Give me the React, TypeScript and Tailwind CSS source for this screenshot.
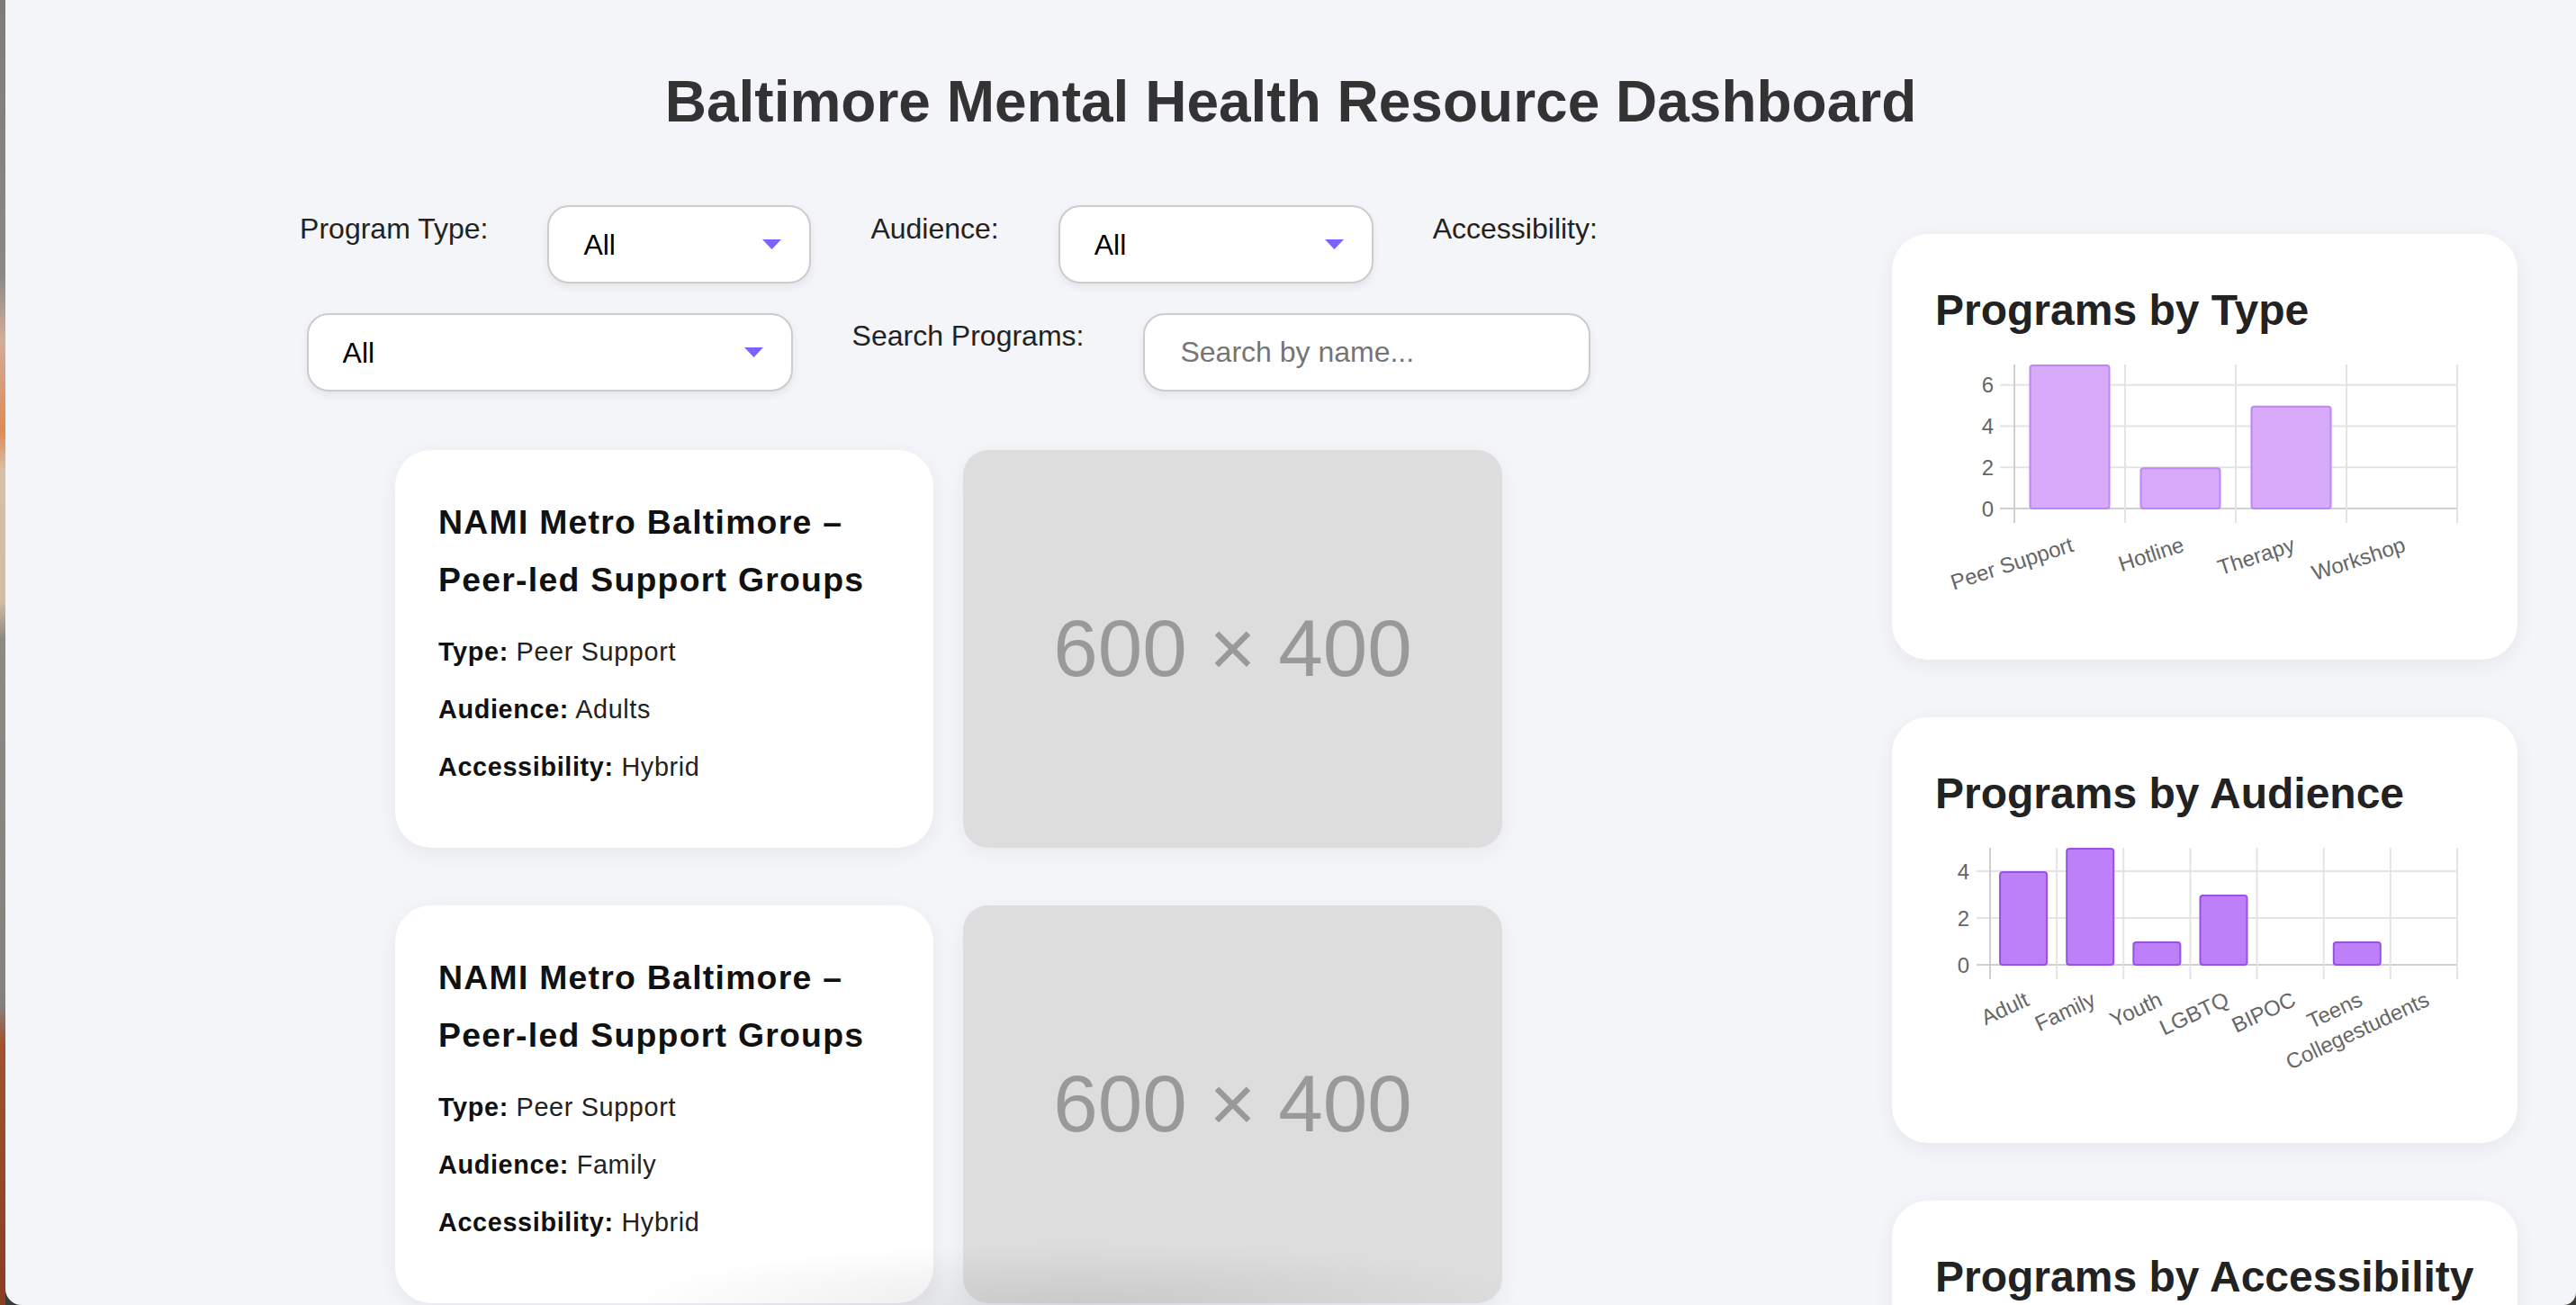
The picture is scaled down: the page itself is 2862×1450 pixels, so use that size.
import React from "react";

type Datum = { label: string; value: number };

const typeData: Datum[] = [
  { label: "Peer Support", value: 7 },
  { label: "Hotline", value: 2 },
  { label: "Therapy", value: 5 },
  { label: "Workshop", value: 0 },
];

const audienceData: Datum[] = [
  { label: "Adult", value: 4 },
  { label: "Family", value: 5 },
  { label: "Youth", value: 1 },
  { label: "LGBTQ", value: 3 },
  { label: "BIPOC", value: 0 },
  { label: "Teens", value: 1 },
  { label: "Collegestudents", value: 0 },
];

const programs = [
  { title: "NAMI Metro Baltimore – Peer-led Support Groups", type: "Peer Support", audience: "Adults", access: "Hybrid" },
  { title: "NAMI Metro Baltimore – Peer-led Support Groups", type: "Peer Support", audience: "Family", access: "Hybrid" },
];

function BarChart({
  data,
  max,
  ticks,
  x0,
  hx0,
  zero,
  tickX,
  rot,
  labelY,
  barW,
  fill,
  stroke,
}: {
  data: Datum[];
  max: number;
  ticks: number[];
  x0: number;
  hx0: number;
  zero: number;
  tickX: number;
  rot: number;
  labelY: number;
  barW: number;
  fill: string;
  stroke: string;
}) {
  const top = 32;
  const x1 = 580;
  const unit = (zero - top) / max;
  const cw = (x1 - x0) / data.length;

  return (
    <svg width="599" height="312" className="block">
      {ticks.map((t) => (
        <line
          key={"h" + t}
          x1={hx0}
          x2={x1}
          y1={zero - t * unit}
          y2={zero - t * unit}
          stroke={t === 0 ? "#cfcfcf" : "#e4e4e4"}
          strokeWidth="2"
        />
      ))}
      {Array.from({ length: data.length + 1 }, (_, i) => (
        <line
          key={"v" + i}
          x1={x0 + i * cw}
          x2={x0 + i * cw}
          y1={top}
          y2={zero + 16}
          stroke={i === 0 ? "#cfcfcf" : "#e4e4e4"}
          strokeWidth="2"
        />
      ))}
      {data.map((d, i) =>
        d.value > 0 ? (
          <rect
            key={d.label}
            x={x0 + i * cw + cw / 2 - barW / 2}
            y={zero - d.value * unit + 1}
            width={barW}
            height={d.value * unit - 1}
            rx="3"
            fill={fill}
            stroke={stroke}
            strokeWidth="2"
          />
        ) : null
      )}
      {ticks.map((t) => (
        <text
          key={"t" + t}
          x={tickX}
          y={zero - t * unit}
          textAnchor="end"
          dominantBaseline="central"
          fontSize="24"
          fill="#666"
        >
          {t}
        </text>
      ))}
      {data.map((d, i) => (
        <text
          key={"l" + d.label}
          transform={`translate(${x0 + i * cw + cw / 2} ${labelY}) rotate(${rot})`}
          y="18"
          textAnchor="end"
          fontSize="24"
          fill="#666"
        >
          {d.label}
        </text>
      ))}
    </svg>
  );
}

function FilterLabel({ children, className = "" }: { children: React.ReactNode; className?: string }) {
  return <label className={"text-[32px] leading-[37px] text-[#222] " + className}>{children}</label>;
}

function SelectBox({ className }: { className: string }) {
  return (
    <div className={"relative " + className}>
      <select className="h-[87px] w-full appearance-none rounded-[24px] border-2 border-[#cccccc] bg-white pl-[38px] text-[32px] text-black shadow-[0_4px_10px_rgba(0,0,0,0.07)] outline-none">
        <option>All</option>
      </select>
      <svg className="pointer-events-none absolute right-[33px] top-[38px]" width="21" height="11" viewBox="0 0 21 11">
        <polygon points="0,0 21,0 10.5,11" fill="#7b61ff" />
      </svg>
    </div>
  );
}

function ChartCard({ title, children }: { title: string; children?: React.ReactNode }) {
  return (
    <div className="h-[473px] shrink-0 rounded-[40px] bg-white px-[48px] pt-[57px] shadow-[0_6px_24px_rgba(0,0,0,0.06)]">
      <h2 className="text-[48px] font-bold leading-[56px] text-[#222]">{title}</h2>
      {children}
    </div>
  );
}

export default function App() {
  return (
    <div className="flex h-[1450px] w-full overflow-hidden bg-[#3c3a39] font-['Liberation_Sans',Arial,sans-serif]">
      <div className="w-[6px] shrink-0 bg-[linear-gradient(to_bottom,#7e7b79_0%,#8b8886_21%,#d2ad9b_26%,#e08a52_33%,#d8bea6_36%,#d6bca4_46%,#8e8983_49%,#86817c_77%,#a4522f_80%,#8a3e22_100%)]" />
      <main className="relative flex-1 rounded-bl-[18px] rounded-br-[14px] bg-[#f4f5f9]">
        <h1 className="mt-[76px] text-center text-[64px] font-bold leading-[74px] text-[#333]">
          Baltimore Mental Health Resource Dashboard
        </h1>

        <div className="mt-[78px] flex gap-[64px] pl-[64px] pr-[65px]">
          <section className="min-w-0 flex-1">
            <div className="flex flex-wrap items-start justify-center gap-x-[66px] gap-y-[33px]">
              <FilterLabel className="mt-[8px]">Program Type:</FilterLabel>
              <SelectBox className="w-[293px]" />
              <FilterLabel className="mt-[8px]">Audience:</FilterLabel>
              <SelectBox className="w-[350px]" />
              <FilterLabel className="mt-[8px]">Accessibility:</FilterLabel>
              <SelectBox className="w-[540px]" />
              <FilterLabel className="mt-[7px]">Search Programs:</FilterLabel>
              <input
                placeholder="Search by name..."
                className="h-[87px] w-[497px] rounded-[24px] border-2 border-[#cccccc] bg-white pl-[39px] text-[32px] text-black shadow-[0_4px_10px_rgba(0,0,0,0.07)] outline-none placeholder:text-[#757575]"
              />
            </div>

            <div className="mt-[65px] flex flex-col gap-[64px]">
              {programs.map((p, i) => (
                <div key={i} className="flex justify-center gap-[33px]">
                  <div className="w-[598px] rounded-[40px] bg-white px-[48px] pt-[48px] shadow-[0_6px_24px_rgba(0,0,0,0.06)]">
                    <h3 className="mb-[16px] text-[37.4px] font-bold leading-[64px] tracking-[1.25px] text-[#111]">{p.title}</h3>
                    <p className="text-[28.8px] leading-[64px] tracking-[0.65px] text-[#222]">
                      <strong className="text-[#111]">Type:</strong> {p.type}
                    </p>
                    <p className="text-[28.8px] leading-[64px] tracking-[0.65px] text-[#222]">
                      <strong className="text-[#111]">Audience:</strong> {p.audience}
                    </p>
                    <p className="text-[28.8px] leading-[64px] tracking-[0.65px] text-[#222]">
                      <strong className="text-[#111]">Accessibility:</strong> {p.access}
                    </p>
                  </div>
                  <div className="flex h-[442px] w-[599px] items-center justify-center rounded-[28px] bg-[#dddddd] text-[89px] text-[#999999] shadow-[0_6px_24px_rgba(0,0,0,0.05)]">
                    600 × 400
                  </div>
                </div>
              ))}
            </div>
          </section>

          <aside className="mt-[32px] flex w-[695px] shrink-0 flex-col gap-[64px]">
            <ChartCard title="Programs by Type">
              <BarChart
                data={typeData}
                max={7}
                ticks={[0, 2, 4, 6]}
                x0={88}
                hx0={72}
                zero={192}
                tickX={65}
                rot={-18}
                labelY={222}
                barW={88}
                fill="#d8abfa"
                stroke="#c084fc"
              />
            </ChartCard>
            <ChartCard title="Programs by Audience">
              <BarChart
                data={audienceData}
                max={5}
                ticks={[0, 2, 4]}
                x0={61}
                hx0={46}
                zero={162}
                tickX={38}
                rot={-25}
                labelY={190}
                barW={52}
                fill="#be80f8"
                stroke="#9b51e0"
              />
            </ChartCard>
            <ChartCard title="Programs by Accessibility" />
          </aside>
        </div>

        {/* soft shadow falling over the bottom edge of the window */}
        <div className="pointer-events-none absolute bottom-0 left-[680px] h-[70px] w-[1020px] bg-[radial-gradient(ellipse_at_bottom,rgba(0,0,0,0.09),rgba(0,0,0,0)_70%)]" />
      </main>
    </div>
  );
}
